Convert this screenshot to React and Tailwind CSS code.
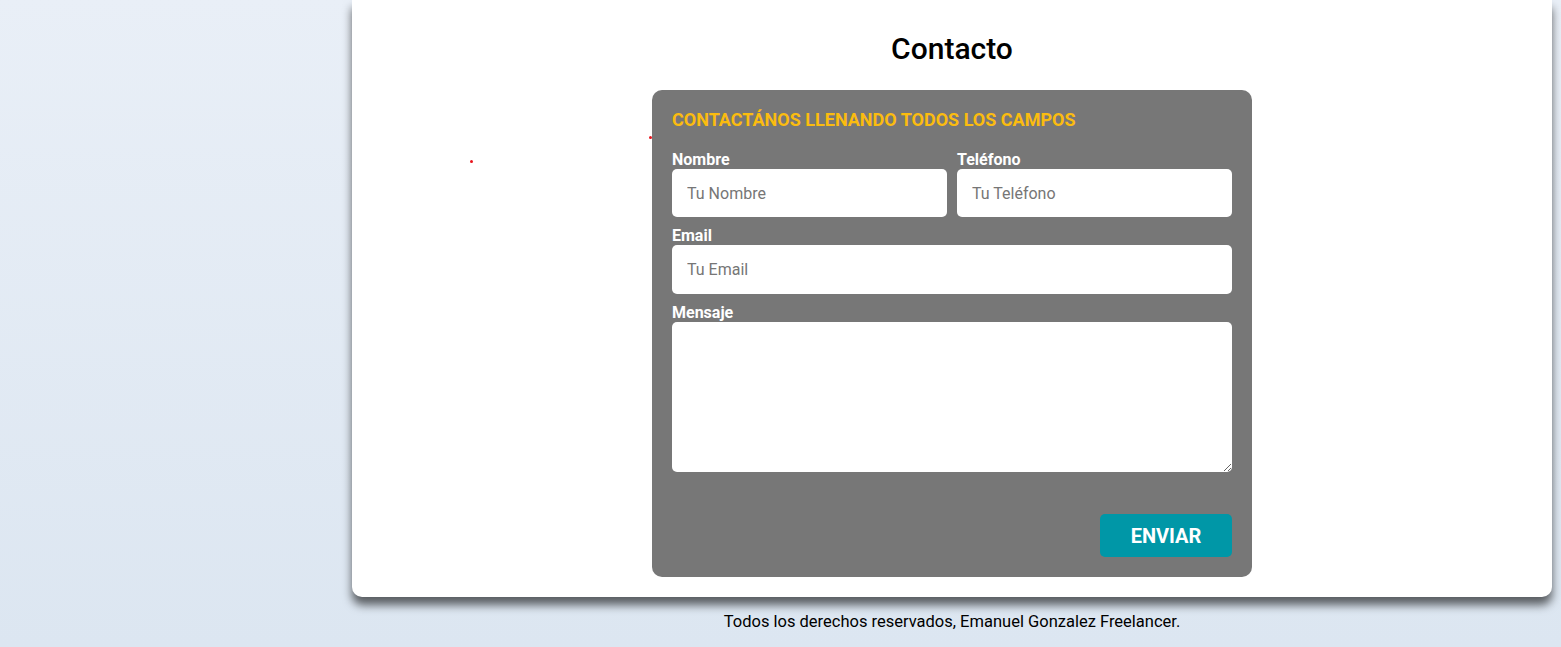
import React from "react";

const inputCls =
  "w-full h-[48px] bg-white rounded-[5px] px-[15px] text-[16px] text-gray-800 placeholder-[#767676] outline-none";

const Field = ({ label, children }) => (
  <div className="flex flex-col flex-1">
    <label className="text-[16px] font-bold text-white leading-[19px]">{label}</label>
    {children}
  </div>
);

export default function App() {
  return (
    <div
      className="min-h-[647px] w-full bg-gradient-to-b from-[#e9eff7] to-[#dce6f1] flex flex-col items-stretch pl-[352px] pr-[9px]"
      style={{ fontFamily: "Roboto, 'Liberation Sans', sans-serif" }}
    >
      <div className="relative bg-white rounded-b-[10px] shadow-[0_8px_10px_rgba(0,0,0,0.6)] flex flex-col items-center pt-[31px] pb-[20px]">
        <span className="absolute left-[118px] top-[160px] w-[3px] h-[3px] rounded-full bg-[#e8141c]" />
        <span className="absolute left-[297px] top-[136px] w-[3px] h-[3px] rounded-full bg-[#e8141c]" />
        <h1 className="text-[30px] font-medium text-black leading-[36px]">Contacto</h1>
        <form
          className="mt-[23px] w-[600px] bg-[#777777] rounded-[10px] p-[20px] flex flex-col"
          onSubmit={(e) => e.preventDefault()}
        >
          <h2 className="text-[18px] font-bold text-[#fbbc0f] leading-[20px]">
            CONTACTÁNOS LLENANDO TODOS LOS CAMPOS
          </h2>
          <div className="flex gap-[10px] mt-[20px]">
            <Field label="Nombre">
              <input className={inputCls} placeholder="Tu Nombre" />
            </Field>
            <Field label="Teléfono">
              <input className={inputCls} placeholder="Tu Teléfono" />
            </Field>
          </div>
          <div className="mt-[9px]">
            <Field label="Email">
              <input className={inputCls + " h-[49px]"} placeholder="Tu Email" />
            </Field>
          </div>
          <div className="mt-[9px]">
            <Field label="Mensaje">
              <textarea className="w-full h-[150px] bg-white rounded-[5px] p-[15px] text-[16px] outline-none block" />
            </Field>
          </div>
          <div className="flex justify-end mt-[42px]">
            <button
              type="submit"
              className="w-[132px] h-[43px] bg-[#0097a7] rounded-[5px] text-white text-[20px] font-bold"
            >
              ENVIAR
            </button>
          </div>
        </form>
      </div>
      <p className="text-center text-[16.5px] leading-[19px] text-black mt-[15px]">
        Todos los derechos reservados, Emanuel Gonzalez Freelancer.
      </p>
    </div>
  );
}
